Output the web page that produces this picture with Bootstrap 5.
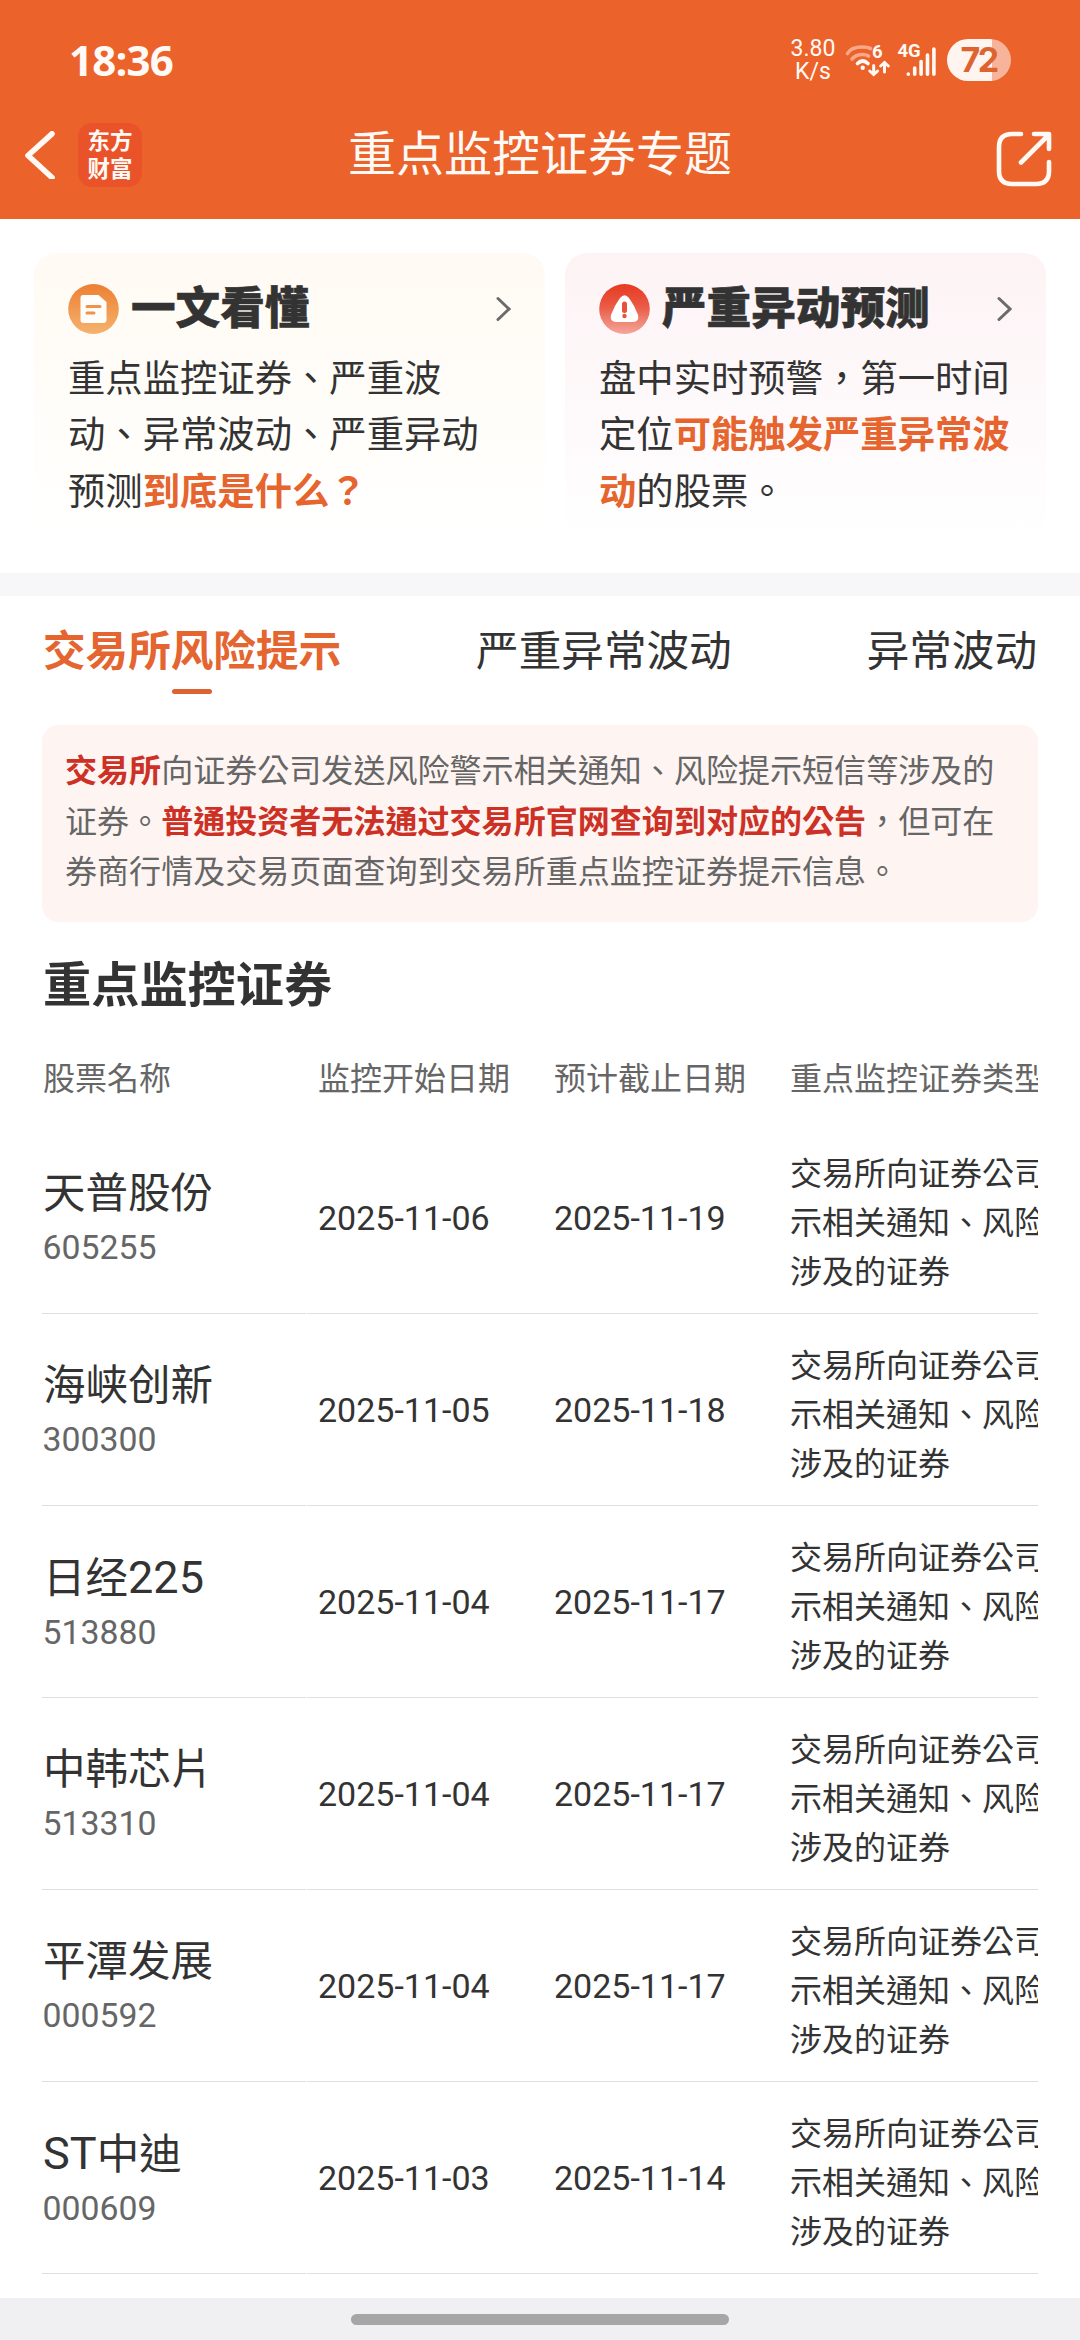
<!DOCTYPE html>
<html lang="zh-Hant">
<head>
<meta charset="utf-8">
<meta name="viewport" content="width=device-width, initial-scale=1">
<title>重点监控证券专题</title>
<link rel="stylesheet" href="https://cdn.jsdelivr.net/npm/bootstrap@5.3.0/dist/css/bootstrap.min.css">
<style>
  body { font-family: Roboto, "Noto Sans CJK TC", sans-serif; color: #333; background: #fff; width: 1080px; height: 2340px; overflow: hidden; font-size: 32px; }
  svg { display: block; flex: none; }
  .app-head { background: #ec622b; height: 219px; color: #fffaf5; flex: none; }
  .status { height: 120px; padding: 0 69px 0 69px; }
  .clock { font: 700 42px/1 "Open Sans", sans-serif; letter-spacing: -.8px; }
  .speed { font-size: 23px; line-height: 23px; width: 46px; margin-right: 9px; }
  .battery { width: 64px; height: 42px; border-radius: 21px; background: linear-gradient(90deg, #fff4ef 45px, #f8b49a 45px); color: #dd6430; font: 700 34px/42px Inter, sans-serif; letter-spacing: -2.5px; margin-left: 10px; padding-right: 1px; }
  .titlebar { height: 70px; padding: 0 26px 0 24px; }
  .brand { width: 64px; height: 64px; border-radius: 14px; background: #ea532a; font-size: 22.5px; line-height: 28px; font-weight: 700; margin-left: 22px; }
  .page-title { font-size: 48px; line-height: 72px; font-weight: 400; }
  .guides { padding: 34px 34px 35px; gap: 20px; height: 354px; flex: none; }
  .guide { border-radius: 22px; padding: 31px 34px 0; height: 285px; }
  .guide-a { width: 511px; background: linear-gradient(#fffaf3, #fffefb 75%, #fff); }
  .guide-b { width: 481px; background: linear-gradient(#fdf3f5, #fefafb 65%, #fff); }
  .guide h2 { font-size: 44.6px; line-height: 50px; font-weight: 900; margin: 0; -webkit-text-stroke: .6px #333; }
  .guide p { font-size: 37.35px; line-height: 56.3px; margin: 17px 0 0; white-space: nowrap; }
  .hot { color: #e6642e; font-weight: 700; }
  .band { height: 23px; background: #f7f7fa; flex: none; }
  .tabs { padding: 0 43px; height: 129px; font-size: 42.6px; flex: none; }
  .tabs .nav-link { padding: 23px 0 0; line-height: 64px; color: #333; position: relative; }
  .tabs .nav-link.active { color: #e4652f; font-weight: 700; }
  .tabs .nav-link.active::after { content: ""; display: block; width: 40px; height: 5px; border-radius: 3px; background: #de6333; margin: 6px 0 0 129px; }
  .notice { margin: 0 42px; height: 197px; border-radius: 16px; background: #fef5f2; padding: 21px 23px; line-height: 50.5px; color: #666; white-space: nowrap; font-size: 32.05px; flex: none; }
  .notice b { color: #cd3126; }
  .section-title { font-size: 48.2px; line-height: 70px; font-weight: 700; margin: 29px 43px 0; flex: none; }
  .grid-table { margin: 0 42px; overflow: hidden; flex: none; }
  .line { display: flex; width: 1165px; height: 192px; }
  .line.heads { height: 101px; color: #666; }
  .line > div { border-bottom: 1px solid #e0e0e0; flex: none; display: flex; flex-direction: column; justify-content: center; white-space: nowrap; }
  .line.heads > div { border: 0; padding-top: 15px; }
  .c1 { width: 264px; padding-left: 1px; margin-right: 1px; }
  .c2 { width: 247px; padding-left: 11px; }
  .c3 { width: 226px; }
  .c4 { width: 427px; padding-left: 10px; line-height: 49px; }
  .line:not(.heads) > .c4 { white-space: normal; padding-top: 11px; }
  .stock { font-size: 42.5px; line-height: 60px; padding-top: 1px; }
  .code { font-size: 33.8px; line-height: 48px; margin-left: -.5px; color: #666; }
  .lat { font-size: 1.06em; }
  .date { font-size: 34px; line-height: 48px; }
  .homebar { height: 42px; background: #f0f0f2; flex: none; padding-top: 16px; }
  .homebar span { display: block; width: 378px; height: 11px; border-radius: 6px; background: #a6a6a6; margin: 0 auto; }
</style>
<script src="https://cdn.jsdelivr.net/npm/bootstrap@5.3.0/dist/js/bootstrap.bundle.min.js"></script>
</head>
<body class="d-flex flex-column">
<header class="app-head">
  <div class="status d-flex align-items-center justify-content-between">
    <span class="clock">18:36</span>
    <div class="d-flex align-items-center">
      <div class="speed text-center">3.80<br>K/s</div>
      <svg width="92" height="42" viewBox="845 39 92 42" fill="none" stroke="#fffaf5" stroke-linecap="round">
        <g stroke-width="3.6">
          <path d="M847.500 53.500Q851 47 862 47Q868 47 870.500 48.500" stroke="#f9a98a"/>
          <path d="M852 59Q856 54.500 862.500 54.500Q866 54.500 868.500 56" stroke="#f9a98a"/>
          <path d="M857.500 63.500Q862.700 58.500 868 63.500"/>
          <path d="M873.700 65.500V74M869.800 71L873.700 74.500L877.600 71M884.500 72V63.500M880.700 66L884.500 62.500L888.300 66" stroke-width="3"/>
          <path d="M908.300 74V74.300M914.700 68V74.300M921.100 61.500V74.300M927.500 55V74.300M933.900 49V74.300"/>
        </g>
        <circle cx="862.700" cy="67.800" r="2.200" fill="#fffaf5" stroke="none"/>
        <g fill="#fffaf5" stroke="none" font-family="Roboto, sans-serif" font-weight="700" font-size="18.500">
          <text x="872" y="58">6</text><text x="897.500" y="57" textLength="23">4G</text>
        </g>
      </svg>
      <div class="battery text-center">72</div>
    </div>
  </div>
  <div class="titlebar d-flex align-items-center position-relative">
    <svg width="32" height="48" viewBox="24 131 32 48" fill="none" stroke="#fffaf5" stroke-width="5.600" stroke-linecap="round" stroke-linejoin="round"><path d="M52 133.800L28 155.500L52 177.500"/></svg>
    <div class="brand d-flex flex-column justify-content-center text-center"><span>东方</span><span>财富</span></div>
    <h1 class="page-title position-absolute start-0 end-0 text-center m-0">重点监控证券专题</h1>
    <svg class="ms-auto mt-2" width="58" height="58" viewBox="996 130 58 58" fill="none" stroke="#fffaf5" stroke-width="4.600" stroke-linecap="round" stroke-linejoin="round"><path d="M1021 134H1012Q999 134 999 147V171Q999 184 1012 184H1036Q1049 184 1049 171V162M1034 134H1049V149M1048 135.500L1021 162.500"/></svg>
  </div>
</header>

<section class="guides d-flex">
  <div class="guide guide-a">
    <div class="d-flex align-items-center">
      <svg width="51" height="50" viewBox="0 0 51 50"><defs><linearGradient id="ga" x2="0" y2="1"><stop stop-color="#ec8033"/><stop offset="1" stop-color="#f5b26e"/></linearGradient></defs><ellipse cx="25.500" cy="25" rx="25.300" ry="25" fill="url(#ga)"/><path d="M15 11H30.500L38.500 18V36Q38.500 39 35.500 39H15.500Q12.500 39 12.500 36V14Q12.500 11 15 11Z" fill="#fffdfa"/><path d="M19 22.500H32M19 29H26" stroke="#f0924a" stroke-width="3" stroke-linecap="round"/></svg>
      <h2 class="ps-1 ms-2">一文看懂</h2>
      <svg class="ms-auto" width="17" height="26" viewBox="0 0 17 26" fill="none" stroke="#6b6b6b" stroke-width="3" stroke-linecap="round"><path d="M4 2.500L15 13L4 23.500"/></svg>
    </div>
    <p>重点监控证券、严重波<br>动、异常波动、严重异动<br>预测<span class="hot">到底是什么？</span></p>
  </div>
  <div class="guide guide-b">
    <div class="d-flex align-items-center">
      <svg width="51" height="50" viewBox="0 0 51 50"><defs><linearGradient id="gb" x2="0" y2="1"><stop stop-color="#e63a20"/><stop offset=".45" stop-color="#ea5a45"/><stop offset="1" stop-color="#f4a79b"/></linearGradient></defs><ellipse cx="25.500" cy="25" rx="25.300" ry="25" fill="url(#gb)"/><path d="M21 14Q25.500 8.500 30 14Q36 22 39 31Q40.500 38 34 38H17Q10.500 38 12 31Q15 22 21 14Z" fill="#fff"/><path d="M25.500 20V26.500" stroke="#e8523c" stroke-width="5" stroke-linecap="round"/><circle cx="25.500" cy="32" r="2.200" fill="#e8523c"/></svg>
      <h2 class="ps-1 ms-2">严重异动预测</h2>
      <svg class="ms-auto" width="17" height="26" viewBox="0 0 17 26" fill="none" stroke="#6b6b6b" stroke-width="3" stroke-linecap="round"><path d="M4 2.500L15 13L4 23.500"/></svg>
    </div>
    <p>盘中实时预警，第一时间<br>定位<span class="hot">可能触发严重异常波<br>动</span>的股票。</p>
  </div>
</section>
<div class="band"></div>

<nav class="tabs nav justify-content-between flex-nowrap">
  <a class="nav-link active">交易所风险提示</a>
  <a class="nav-link">严重异常波动</a>
  <a class="nav-link">异常波动</a>
</nav>

<div class="notice"><b>交易所</b>向证券公司发送风险警示相关通知、风险提示短信等涉及的<br>证券。<b>普通投资者无法通过交易所官网查询到对应的公告</b>，但可在<br>券商行情及交易页面查询到交易所重点监控证券提示信息。</div>

<h2 class="section-title">重点监控证券</h2>

<div class="grid-table">
  <div class="line heads">
    <div class="c1">股票名称</div><div class="c2">监控开始日期</div><div class="c3">预计截止日期</div><div class="c4">重点监控证券类型</div>
  </div>
  <div class="line">
    <div class="c1"><span class="stock">天普股份</span><span class="code">605255</span></div>
    <div class="c2 date">2025-11-06</div><div class="c3 date">2025-11-19</div>
    <div class="c4">交易所向证券公司发送风险警示相关通知、风险提示短信等涉及的证券</div>
  </div>
  <div class="line">
    <div class="c1"><span class="stock">海峡创新</span><span class="code">300300</span></div>
    <div class="c2 date">2025-11-05</div><div class="c3 date">2025-11-18</div>
    <div class="c4">交易所向证券公司发送风险警示相关通知、风险提示短信等涉及的证券</div>
  </div>
  <div class="line">
    <div class="c1"><span class="stock">日经<span class="lat">225</span></span><span class="code">513880</span></div>
    <div class="c2 date">2025-11-04</div><div class="c3 date">2025-11-17</div>
    <div class="c4">交易所向证券公司发送风险警示相关通知、风险提示短信等涉及的证券</div>
  </div>
  <div class="line">
    <div class="c1"><span class="stock">中韩芯片</span><span class="code">513310</span></div>
    <div class="c2 date">2025-11-04</div><div class="c3 date">2025-11-17</div>
    <div class="c4">交易所向证券公司发送风险警示相关通知、风险提示短信等涉及的证券</div>
  </div>
  <div class="line">
    <div class="c1"><span class="stock">平潭发展</span><span class="code">000592</span></div>
    <div class="c2 date">2025-11-04</div><div class="c3 date">2025-11-17</div>
    <div class="c4">交易所向证券公司发送风险警示相关通知、风险提示短信等涉及的证券</div>
  </div>
  <div class="line">
    <div class="c1"><span class="stock"><span class="lat">ST</span>中迪</span><span class="code">000609</span></div>
    <div class="c2 date">2025-11-03</div><div class="c3 date">2025-11-14</div>
    <div class="c4">交易所向证券公司发送风险警示相关通知、风险提示短信等涉及的证券</div>
  </div>
</div>
<div class="homebar mt-auto"><span></span></div>
</body>
</html>
